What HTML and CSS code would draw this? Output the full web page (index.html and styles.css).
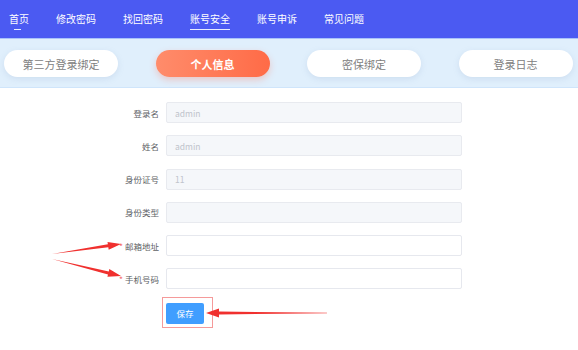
FILE: index.html
```html
<!DOCTYPE html>
<html lang="zh-CN">
<head>
  <meta charset="UTF-8">
  <meta name="viewport" content="width=device-width, initial-scale=1.0">
  <title>账号安全 - 个人信息</title>
  <link rel="stylesheet" href="styles.css">
</head>
<body>

  <!-- Top Navigation -->
  <div class="nav">
    <a class="nav-item home">首页</a>
    <a class="nav-item">修改密码</a>
    <a class="nav-item">找回密码</a>
    <a class="nav-item current">账号安全</a>
    <a class="nav-item">账号申诉</a>
    <a class="nav-item">常见问题</a>
  </div>

  <!-- Tabs -->
  <div class="tab-bar">
    <button class="tab">第三方登录绑定</button>
    <button class="tab active">个人信息</button>
    <button class="tab">密保绑定</button>
    <button class="tab">登录日志</button>
  </div>

  <!-- Profile Form -->
  <div class="form">
    <div class="form-row">
      <label class="form-label">登录名</label>
      <input class="form-input" type="text" placeholder="admin" disabled>
    </div>
    <div class="form-row">
      <label class="form-label">姓名</label>
      <input class="form-input" type="text" placeholder="admin" disabled>
    </div>
    <div class="form-row">
      <label class="form-label">身份证号</label>
      <input class="form-input" type="text" placeholder="11" disabled>
    </div>
    <div class="form-row">
      <label class="form-label">身份类型</label>
      <input class="form-input" type="text" disabled>
    </div>
    <div class="form-row">
      <label class="form-label"><span class="required">*</span>邮箱地址</label>
      <input class="form-input" type="text">
    </div>
    <div class="form-row">
      <label class="form-label"><span class="required">*</span>手机号码</label>
      <input class="form-input" type="text">
    </div>
    <div class="form-row">
      <span class="form-label"></span>
      <button class="save-button">保存</button>
    </div>
  </div>

  <!-- Annotation arrows drawn over the page -->
  <svg class="marks" width="578" height="350" viewBox="0 0 578 350">
    <rect x="162.5" y="297.5" width="50" height="30" fill="none" stroke="#f59a9a" stroke-width="1"/>
    <polygon fill="#f0302e" points="52,254 107.9,244.3 107.5,241.9 121,244 108.7,249.8 108.3,247.3"/>
    <polygon fill="#f0302e" points="52,259 108.8,271.4 109.3,269 121,276 107.4,276.8 108,274.4"/>
    <polygon fill="#f0302e" points="327,312.7 219,311.6 219,308.5 206,313 219,317.5 219,314.4 327,313.3"/>
  </svg>

</body>
</html>
```

FILE: styles.css
```css
* {
  margin: 0;
  padding: 0;
  box-sizing: border-box;
  font-family: "Noto Sans CJK SC", "Noto Sans", sans-serif;
}

body {
  width: 578px;
  height: 350px;
  background: #fff;
  position: relative;
  overflow: hidden;
}

.nav {
  height: 38px;
  background: #4b5af2;
  display: flex;
  align-items: center;
  gap: 27px;
  padding-left: 9px;
}

.nav-item {
  position: relative;
  font-size: 10px;
  line-height: 14px;
  color: #fff;
  cursor: pointer;
}

/* underline for current and home items */
.nav-item.current::after,
.nav-item.home::after {
  content: "";
  position: absolute;
  left: 0;
  right: 0;
  bottom: -4px;
  height: 1px;
  background: #e8ecff;
}

.nav-item.home::after {
  left: 5px;
  right: 8px;
}

.tab-bar {
  height: 50px;
  background: #e0effc;
  border-top: 1px solid #a9c3fb;
  border-bottom: 1px solid #cfe5fb;
  display: flex;
  align-items: center;
  gap: 37.5px;
  padding: 1px 0 0 4px;
}

.tab {
  width: 114px;
  height: 27px;
  border: none;
  border-radius: 14px;
  background: #fff;
  color: #808080;
  font-size: 11px;
  box-shadow: 0 2px 6px rgba(120, 150, 190, 0.18);
  cursor: pointer;
}

.tab.active {
  background: linear-gradient(90deg, #ff8c6b, #ff6b47);
  color: #fff;
  font-weight: bold;
  box-shadow: 0 3px 7px rgba(255, 110, 80, 0.3);
}

.form {
  padding-top: 14px;
  display: flex;
  flex-direction: column;
  gap: 12.3px;
}

.form-row {
  display: flex;
  align-items: center;
  height: 21px;
}

.form-label {
  width: 159px;
  margin-right: 7px;
  text-align: right;
  font-size: 8.5px;
  color: #606266;
}

.required {
  color: #f56c6c;
  margin-right: 2px;
}

.form-input {
  width: 296px;
  height: 21px;
  border: 1px solid #e6e8ee;
  border-radius: 2px;
  background: #fff;
  padding-left: 8px;
  font-size: 8.5px;
  color: #606266;
  outline: none;
}

.form-input:disabled {
  background: #f5f7fa;
  border-color: #e8eaef;
}

.form-input::placeholder {
  color: #c0c4cc;
}

.form-row:last-child {
  margin-top: 1px;
}

.save-button {
  width: 38px;
  height: 21px;
  border: none;
  border-radius: 2px;
  background: #409eff;
  color: #fff;
  font-size: 8.5px;
  cursor: pointer;
}

.marks {
  position: absolute;
  left: 0;
  top: 0;
  pointer-events: none;
}
```
